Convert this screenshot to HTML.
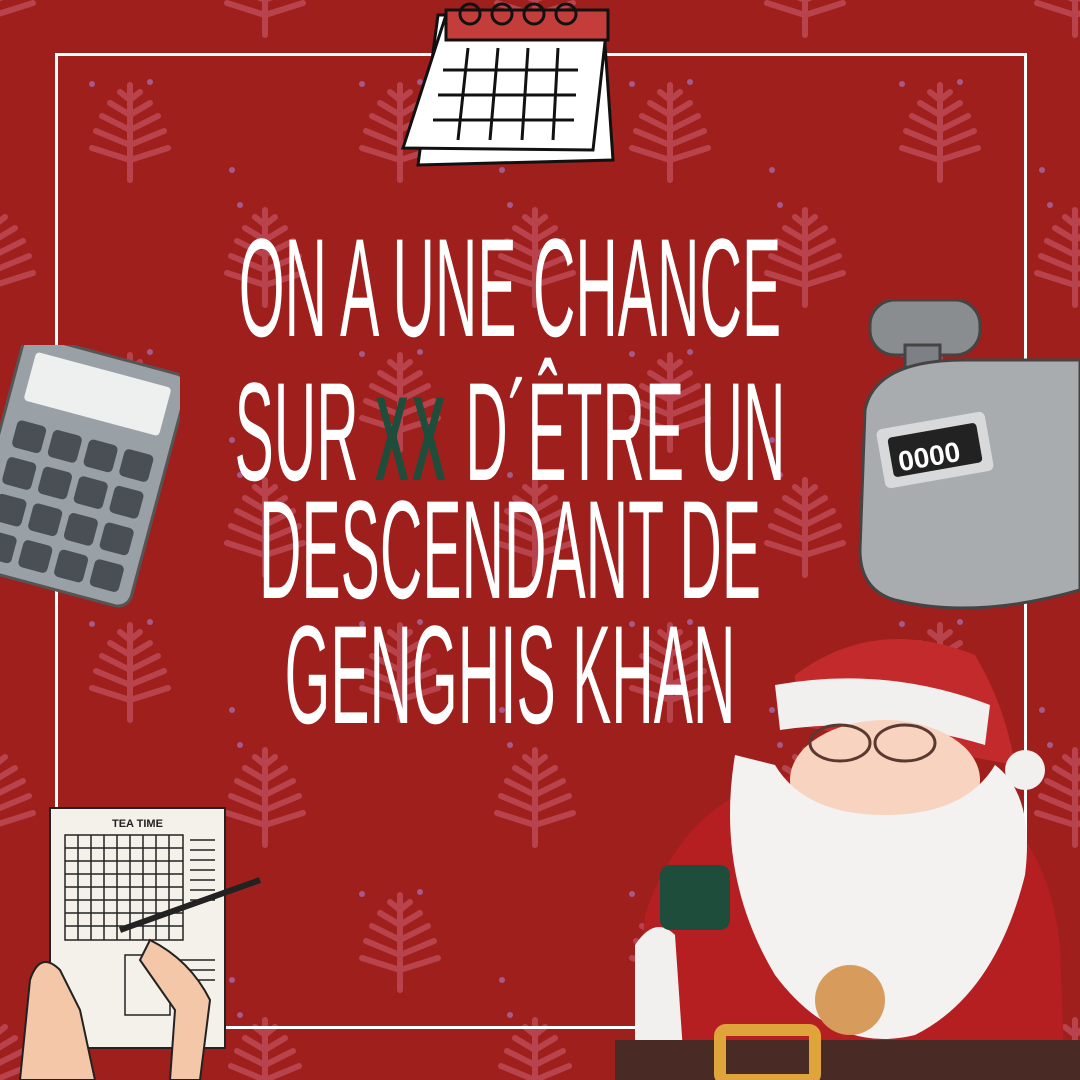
<!DOCTYPE html>
<html><head><meta charset="utf-8"><style>
html,body{margin:0;padding:0;overflow:hidden}
body{width:1080px;height:1080px;position:relative;overflow:hidden;background:#9e1f1b;font-family:"Liberation Sans",sans-serif}
svg.bg{position:absolute;left:0;top:0}
.frame{position:absolute;left:55px;top:53px;width:966px;height:970px;border:3px solid #fff}
.line{position:absolute;left:510px;color:#fff;font-size:140px;line-height:140px;white-space:nowrap;transform:translateX(-50%) scaleX(.42)}
.xx{color:#1f4d3b;font-weight:bold;font-size:120px;letter-spacing:8px}
</style></head><body>
<svg class="bg" width="1080" height="1080">
<defs>
<g id="t" stroke="#b9434c" stroke-width="6" stroke-linecap="round" fill="none">
<path d="M0,-45 V50 M0,-30 l-10,-8 M0,-30 l10,-8 M0,-15 l-20,-12 M0,-15 l20,-12 M0,0 l-28,-14 M0,0 l28,-14 M0,15 l-34,-14 M0,15 l34,-14 M0,30 l-38,-12 M0,30 l38,-12"/>
</g>
<pattern id="p" width="270" height="270" patternUnits="userSpaceOnUse">
<use href="#t" x="130" y="130"/><use href="#t" x="265" y="255"/><use href="#t" x="-5" y="255"/><use href="#t" x="265" y="-15"/><use href="#t" x="-5" y="-15"/>
<circle cx="92" cy="84" r="3" fill="#a45a8a"/><circle cx="150" cy="82" r="3" fill="#a45a8a"/><circle cx="232" cy="170" r="3" fill="#a45a8a"/><circle cx="240" cy="205" r="3" fill="#a45a8a"/>
</pattern></defs>
<rect width="1080" height="1080" fill="url(#p)"/>
</svg>
<div class="frame"></div>
<svg style="position:absolute;left:398px;top:0" width="222" height="170">
<polygon points="40,15 205,15 215,160 20,165" fill="#fff" stroke="#111" stroke-width="3"/>
<polygon points="48,15 210,15 195,150 5,148" fill="#fff" stroke="#111" stroke-width="3"/>
<rect x="48" y="10" width="162" height="30" fill="#c53d3a" stroke="#111" stroke-width="3"/>
<g fill="none" stroke="#111" stroke-width="3"><circle cx="72" cy="14" r="10"/><circle cx="104" cy="14" r="10"/><circle cx="136" cy="14" r="10"/><circle cx="168" cy="14" r="10"/>
<path d="M45,70 H180 M40,95 H178 M35,120 H176 M70,48 L60,140 M100,48 L92,140 M130,48 L124,140 M160,48 L155,140"/></g>
</svg>
<svg style="position:absolute;left:0;top:345px" width="180" height="270">
<g transform="rotate(15 90 135)"><rect x="-10" y="10" width="170" height="240" rx="14" fill="#9aa1a6" stroke="#555" stroke-width="3"/>
<rect x="5" y="25" width="140" height="50" rx="4" fill="#eef0ef"/>
<g fill="#4a4f55"><rect x="5" y="95" width="30" height="28" rx="5"/><rect x="42" y="95" width="30" height="28" rx="5"/><rect x="79" y="95" width="30" height="28" rx="5"/><rect x="116" y="95" width="30" height="28" rx="5"/>
<rect x="5" y="133" width="30" height="28" rx="5"/><rect x="42" y="133" width="30" height="28" rx="5"/><rect x="79" y="133" width="30" height="28" rx="5"/><rect x="116" y="133" width="30" height="28" rx="5"/>
<rect x="5" y="171" width="30" height="28" rx="5"/><rect x="42" y="171" width="30" height="28" rx="5"/><rect x="79" y="171" width="30" height="28" rx="5"/><rect x="116" y="171" width="30" height="28" rx="5"/>
<rect x="5" y="209" width="30" height="28" rx="5"/><rect x="42" y="209" width="30" height="28" rx="5"/><rect x="79" y="209" width="30" height="28" rx="5"/><rect x="116" y="209" width="30" height="28" rx="5"/></g></g>
</svg>
<svg style="position:absolute;left:855px;top:300px" width="225" height="310">
<rect x="15" y="0" width="110" height="55" rx="25" fill="#8a8d90" stroke="#444" stroke-width="3"/>
<rect x="50" y="45" width="35" height="70" fill="#7d8084" stroke="#444" stroke-width="3"/>
<path d="M10,110 Q20,60 110,60 L225,60 L225,290 Q120,320 40,300 Q5,290 5,250 Z" fill="#a9acaf" stroke="#444" stroke-width="3"/>
<rect x="25" y="120" width="110" height="60" rx="6" fill="#d7d9db" transform="rotate(-10 80 150)"/>
<rect x="35" y="130" width="90" height="40" rx="4" fill="#222" transform="rotate(-10 80 150)"/>
<text x="42" y="165" fill="#fff" font-size="28" font-weight="bold" transform="rotate(-10 80 150)">0000</text>
</svg>
<svg style="position:absolute;left:0;top:800px" width="275" height="280">
<rect x="50" y="8" width="175" height="240" fill="#f4f1ea" stroke="#222" stroke-width="2"/>
<text x="112" y="27" font-size="11" font-weight="bold" fill="#222">TEA TIME</text>
<g stroke="#222" stroke-width="1.5" fill="none"><rect x="65" y="35" width="118" height="105"/>
<path d="M78,35V140M91,35V140M104,35V140M117,35V140M130,35V140M143,35V140M156,35V140M169,35V140M65,48H183M65,61H183M65,74H183M65,87H183M65,100H183M65,113H183M65,126H183"/>
<rect x="125" y="155" width="45" height="60"/><path d="M190,40H215M190,50H215M190,60H215M190,70H215M190,80H215M190,90H215M190,100H215M180,160H215M180,170H215M180,180H215"/></g>
<path d="M20,280 L30,180 Q40,150 60,170 L80,210 L95,280Z" fill="#f4c7a8" stroke="#222" stroke-width="2"/>
<path d="M200,280 L210,200 Q190,160 150,140 L140,160 L175,210 L170,280Z" fill="#f4c7a8" stroke="#222" stroke-width="2"/>
<path d="M120,130 L260,80" stroke="#222" stroke-width="6"/>
</svg>
<svg style="position:absolute;left:615px;top:615px" width="465" height="465">
<path d="M60,465 Q20,380 30,300 Q70,180 180,160 L330,160 Q430,200 445,330 L450,465 Z" fill="#b51f22"/>
<path d="M20,330 Q40,300 60,320 L70,465 L20,465 Z" fill="#f2f0ee"/>
<path d="M180,60 Q260,0 360,40 Q390,90 400,150 L180,110 Z" fill="#c32a2b"/>
<circle cx="410" cy="155" r="20" fill="#f2f0ee"/>
<path d="M160,70 Q270,50 375,90 L370,130 Q270,100 165,115 Z" fill="#f2f0ee"/>
<ellipse cx="270" cy="165" rx="95" ry="60" fill="#f8d3c0"/>
<path d="M120,140 Q100,260 160,360 Q220,440 300,420 Q380,380 410,260 Q420,180 380,150 Q350,200 270,200 Q190,200 160,150 Z" fill="#f4f2f0"/>
<g fill="none" stroke="#5a3a30" stroke-width="3"><ellipse cx="225" cy="128" rx="30" ry="18"/><ellipse cx="290" cy="128" rx="30" ry="18"/></g>
<rect x="45" y="250" width="70" height="65" rx="10" fill="#1f4d3b"/>
<circle cx="235" cy="385" r="35" fill="#d79b5c"/>
<rect x="0" y="425" width="465" height="40" fill="#4a2a25"/>
<rect x="105" y="415" width="95" height="50" rx="6" fill="none" stroke="#e0a53a" stroke-width="12"/>
</svg>
<div class="line" style="top:218px">ON A UNE CHANCE</div>
<div class="line" style="top:362px">SUR <b class="xx">XX</b> D´ÊTRE UN</div>
<div class="line" style="top:480px">DESCENDANT DE</div>
<div class="line" style="top:605px">GENGHIS KHAN</div>
</body></html>
